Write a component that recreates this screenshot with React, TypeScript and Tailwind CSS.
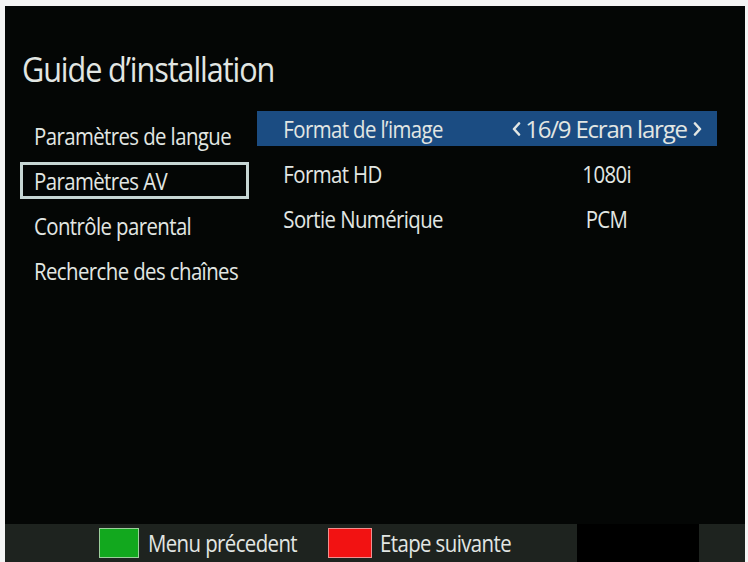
import React from "react";

function Chevron({ dir }: { dir: "l" | "r" }) {
  return (
    <svg width="9" height="14" viewBox="0 0 9 14" className="shrink-0">
      <polyline
        points={dir === "l" ? "7,1.5 2,7 7,12.5" : "2,1.5 7,7 2,12.5"}
        fill="none"
        stroke="#e2e6e3"
        strokeWidth="2.6"
        strokeLinecap="round"
        strokeLinejoin="round"
      />
    </svg>
  );
}

export default function App() {
  const font = { fontFamily: "'Open Sans', 'Liberation Sans', sans-serif" };
  return (
    <div className="w-[748px] h-[562px] bg-[#f4f4f4] pt-[6px] pl-[5px] pr-[3px] overflow-hidden" style={font}>
      <div className="w-full h-full bg-[#040605] flex flex-col text-[#e2e6e3]">
        <div className="h-[104px] flex items-center pl-[17px] pt-[22px]">
          <span className="text-[34px] tracking-[-1.2px] [transform:scaleX(0.9)] origin-left whitespace-nowrap">Guide d’installation</span>
        </div>
        <div className="flex flex-1">
          <div className="w-[252px] pl-[15px] flex flex-col pt-[7px]">
            {["Paramètres de langue", "Paramètres AV", "Contrôle parental", "Recherche des chaînes"].map((t, i) => (
              <div
                key={t}
                className={
                  "h-[37px] mb-[8px] flex items-center text-[24px] tracking-[-0.7px] w-[229px] " +
                  (i === 1 ? "border-[3px] border-[#c7d6d4] pl-[11px]" : "pl-[14px]")
                }
              >
                <span className="[transform:scaleX(0.85)] origin-left whitespace-nowrap">{t}</span>
              </div>
            ))}
          </div>
          <div className="w-[460px] flex flex-col pt-[1px]">
            {[
              ["Format de l’image", "16/9 Ecran large"],
              ["Format HD", "1080i"],
              ["Sortie Numérique", "PCM"],
            ].map(([k, v], i) => (
              <div
                key={k}
                className={
                  "h-[35px] mb-[10px] flex items-center text-[24px] tracking-[-0.7px] " +
                  (i === 0 ? "bg-[#1b4c82]" : "")
                }
              >
                <span className="pl-[31px] w-[240px] [transform:scaleX(0.85)] origin-left whitespace-nowrap">{k}</span>
                <span className="flex-1 flex justify-center items-center whitespace-nowrap">
                  {i === 0 && <span className="mr-[4px] flex items-center"><Chevron dir="l" /></span>}
                  <span className={i === 0 ? "tracking-[-1.2px]" : "[transform:scaleX(0.85)]"}>{v}</span>
                  {i === 0 && <span className="ml-[6px] flex items-center"><Chevron dir="r" /></span>}
                </span>
              </div>
            ))}
          </div>
        </div>
        <div className="h-[38px] bg-[#1e231f] flex items-center text-[24px] tracking-[-0.7px]">
          <div className="w-[94px]" />
          <div className="w-[40px] h-[30px] bg-[#12a81e] border border-[#9ccf9c]" />
          <span className="ml-[9px] w-[180px] [transform:scaleX(0.85)] origin-left whitespace-nowrap">Menu précedent</span>
          <div className="w-[44px] h-[30px] bg-[#f21212] border border-[#f09090]" />
          <span className="ml-[8px] w-[197px] [transform:scaleX(0.85)] origin-left whitespace-nowrap">Etape suivante</span>
          <div className="w-[122px] h-full bg-black" />
        </div>
      </div>
    </div>
  );
}
